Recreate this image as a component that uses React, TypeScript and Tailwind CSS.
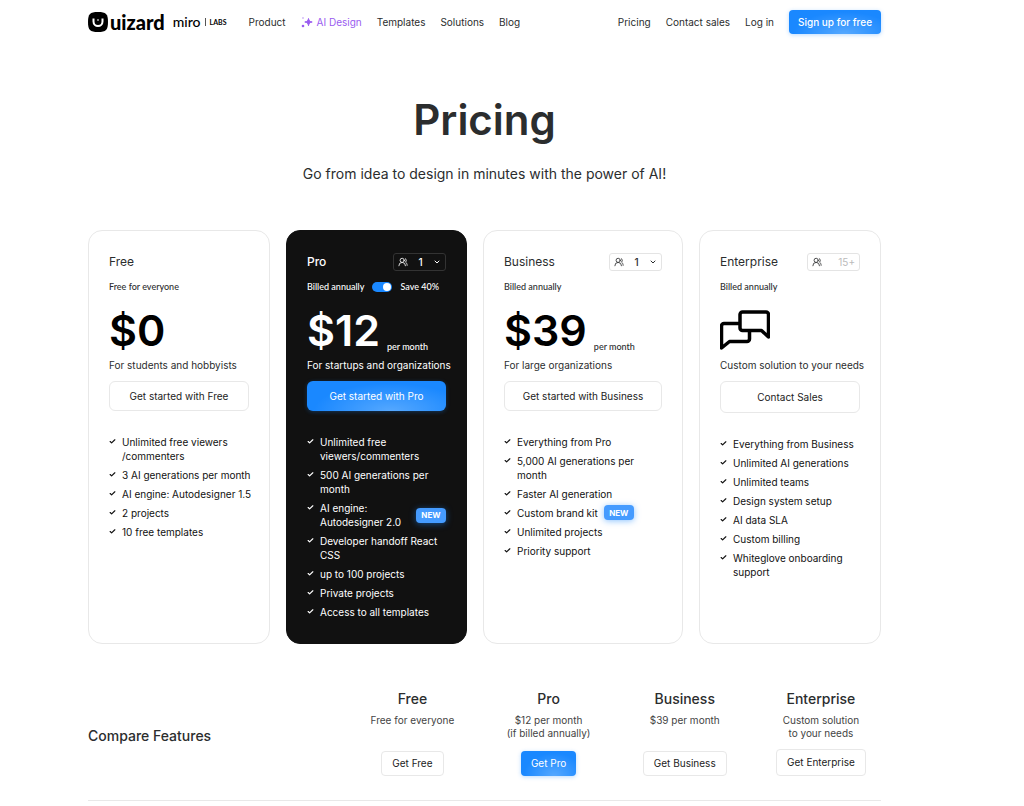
import type { ReactNode } from "react";
import clsx from "clsx";
import { Check, ChevronDown, UsersRound } from "lucide-react";

interface Feature {
  label: string;
  isNew?: boolean;
}

interface Plan {
  name: string;
  billing: string;
  price?: string;
  perMonth?: boolean;
  description: string;
  cta: string;
  seats?: string;
  features: Feature[];
}

const plans: Plan[] = [
  {
    name: "Free",
    billing: "Free for everyone",
    price: "$0",
    description: "For students and hobbyists",
    cta: "Get started with Free",
    features: [
      { label: "Unlimited free viewers\n/commenters" },
      { label: "3 AI generations per month" },
      { label: "AI engine: Autodesigner 1.5" },
      { label: "2 projects" },
      { label: "10 free templates" },
    ],
  },
  {
    name: "Pro",
    billing: "Billed annually",
    price: "$12",
    perMonth: true,
    description: "For startups and organizations",
    cta: "Get started with Pro",
    seats: "1",
    features: [
      { label: "Unlimited free\nviewers/commenters" },
      { label: "500 AI generations per\nmonth" },
      { label: "AI engine:\nAutodesigner 2.0", isNew: true },
      { label: "Developer handoff React\nCSS" },
      { label: "up to 100 projects" },
      { label: "Private projects" },
      { label: "Access to all templates" },
    ],
  },
  {
    name: "Business",
    billing: "Billed annually",
    price: "$39",
    perMonth: true,
    description: "For large organizations",
    cta: "Get started with Business",
    seats: "1",
    features: [
      { label: "Everything from Pro" },
      { label: "5,000 AI generations per\nmonth" },
      { label: "Faster AI generation" },
      { label: "Custom brand kit", isNew: true },
      { label: "Unlimited projects" },
      { label: "Priority support" },
    ],
  },
  {
    name: "Enterprise",
    billing: "Billed annually",
    description: "Custom solution to your needs",
    cta: "Contact Sales",
    seats: "15+",
    features: [
      { label: "Everything from Business" },
      { label: "Unlimited AI generations" },
      { label: "Unlimited teams" },
      { label: "Design system setup" },
      { label: "AI data SLA" },
      { label: "Custom billing" },
      { label: "Whiteglove onboarding\nsupport" },
    ],
  },
];

const compare = [
  { name: "Free", note: "Free for everyone", cta: "Get Free" },
  { name: "Pro", note: "$12 per month\n(if billed annually)", cta: "Get Pro" },
  { name: "Business", note: "$39 per month", cta: "Get Business" },
  { name: "Enterprise", note: "Custom solution\nto your needs", cta: "Get Enterprise" },
];

const blueButton =
  "bg-[#1a88ff] bg-[radial-gradient(ellipse_at_60%_100%,#55a8ff_0%,#1a88ff_65%)] text-white shadow-[0_1px_4px_rgba(26,136,255,0.3)]";
const plainButton = "border border-[#e8e8e8] bg-white text-[#222]";

export default function App() {
  return (
    <div className="min-h-screen bg-white pl-[88px] pr-[143px] font-['Inter',sans-serif] text-[#2b2d2e]">
      <Header />
      <main>
        <section className="pt-[52px] text-center">
          <h1 className="text-[42px] font-semibold leading-[48px]">Pricing</h1>
          <p className="mt-[18px] text-[14px] leading-6">
            Go from idea to design in minutes with the power of AI!
          </p>
        </section>
        <section className="mt-11 grid grid-cols-[182fr_181fr_200fr_182fr] gap-4">
          {plans.map((plan) => (
            <PlanCard key={plan.name} {...plan} />
          ))}
        </section>
        <CompareTable />
      </main>
    </div>
  );
}

function Header() {
  return (
    <header className="flex h-11 items-center text-[10px]">
      <a href="#" className="flex items-center font-['Lato',sans-serif] text-black">
        <LogoMark />
        <span className="ml-0.5 text-[20px] font-black leading-5">uizard</span>
        <span className="ml-2 text-[14px] font-medium leading-5">miro</span>
        <span className="ml-1 h-2 w-px bg-[#555]" />
        <span className="ml-1 text-[7px] font-bold">LABS</span>
      </a>
      <nav className="ml-[22px] flex items-center gap-[15px]">
        <a href="#">Product</a>
        <a href="#" className="flex items-center gap-1 text-[#9a5cf0]">
          <Sparkles />
          AI Design
        </a>
        <a href="#">Templates</a>
        <a href="#">Solutions</a>
        <a href="#">Blog</a>
      </nav>
      <nav className="ml-auto flex items-center gap-[15px]">
        <a href="#">Pricing</a>
        <a href="#">Contact sales</a>
        <a href="#">Log in</a>
        <button className={clsx("h-6 w-[92px] rounded font-medium", blueButton)}>
          Sign up for free
        </button>
      </nav>
    </header>
  );
}

function PlanCard(props: Plan) {
  const dark = props.name === "Pro";
  const enterprise = props.name === "Enterprise";

  return (
    <article
      className={clsx(
        "min-h-[414px] min-w-0 rounded-[14px] border px-5 pt-[22px] pb-6 text-[10px]",
        dark ? "border-[#111] bg-[#111] text-white" : "border-[#e8e8e8] bg-white",
      )}
    >
      <div className="flex h-[18px] items-center justify-between">
        <h2 className={clsx("text-[12px]", dark && "font-medium")}>{props.name}</h2>
        {props.seats && <SeatSelect plan={props.name} seats={props.seats} dark={dark} />}
      </div>

      <div className="mt-2 flex h-4 items-center whitespace-nowrap font-['Lato',sans-serif] text-[9px] font-medium">
        {dark ? (
          <label className="flex items-center gap-2">
            {props.billing}
            <input type="checkbox" defaultChecked className="peer sr-only" />
            <span className="flex h-[10px] w-5 justify-end rounded-full bg-[#1a88ff] p-px">
              <span className="size-2 rounded-full bg-white" />
            </span>
            Save 40%
          </label>
        ) : (
          props.billing
        )}
      </div>

      <div className="mt-2 flex h-[54px] items-center">
        {props.price ? (
          <div className="flex items-end gap-[7px]">
            <span
              className={clsx(
                "text-[43px] font-semibold leading-[54px]",
                dark ? "text-white" : "text-black",
              )}
            >
              {props.price}
            </span>
            {props.perMonth && (
              <span className="whitespace-nowrap pb-1 font-['Lato',sans-serif] text-[9px] font-medium leading-3">
                per month
              </span>
            )}
          </div>
        ) : (
          <ChatBubbles />
        )}
      </div>

      <p className="h-4 whitespace-nowrap leading-4">{props.description}</p>
      <button
        className={clsx(
          "mt-2 w-full rounded-md",
          enterprise ? "h-8" : "h-[30px]",
          dark ? blueButton : plainButton,
        )}
      >
        {props.cta}
      </button>

      <ul className={clsx("mt-6 flex flex-col gap-[5px]", !dark && "text-[#111]")}>
        {props.features.map((feature) => (
          <li key={feature.label} className="flex items-start gap-[6px] whitespace-pre leading-[14px]">
            <Check className="mt-[3px] size-[7px] shrink-0" strokeWidth={4} />
            <span>{feature.label}</span>
            {feature.isNew && <NewBadge className={dark ? "ml-auto self-center" : ""} />}
          </li>
        ))}
      </ul>
    </article>
  );
}

function SeatSelect({ plan, seats, dark }: { plan: string; seats: string; dark: boolean }) {
  const fixed = seats === "15+";

  return (
    <label
      className={clsx(
        "flex h-[18px] w-[53px] items-center rounded-[3px] border px-1",
        dark ? "border-[#333]" : "border-[#e4e4e4]",
      )}
    >
      <UsersRound className="size-[10px] shrink-0" strokeWidth={2} />
      <select
        aria-label={`${plan} seats`}
        disabled={fixed}
        className={clsx(
          "min-w-0 flex-1 appearance-none bg-transparent text-[10px]",
          fixed ? "text-right text-[#bbb]" : "text-center font-medium",
        )}
      >
        <option>{seats}</option>
      </select>
      {!fixed && <ChevronDown className="size-2 shrink-0" strokeWidth={3} />}
    </label>
  );
}

function NewBadge({ className }: { className?: string }) {
  return (
    <span
      className={clsx(
        "-my-px flex h-[15px] w-[30px] shrink-0 items-center justify-center rounded-sm bg-[#459bff] text-[8px] font-bold text-white shadow-[0_1px_6px_rgba(26,136,255,0.5)]",
        className,
      )}
    >
      NEW
    </span>
  );
}

function CompareTable() {
  return (
    <section className="mt-[46px] border-b border-[#e8e8e8]">
      {/* Slightly wider than the rule so the last column sits under its card */}
      <table className="w-[calc(100%+8px)] table-fixed">
        <thead>
          <tr>
            <th scope="col" className="w-[32%] pb-5 text-left text-[14px] font-medium">
              Compare Features
            </th>
            {compare.map((column) => (
              <th key={column.name} scope="col" className="pb-6 align-top font-normal">
                <CompareColumn note={column.note} name={column.name}>
                  <button
                    className={clsx(
                      "rounded px-[10px] text-[10px]",
                      column.name === "Enterprise" ? "h-[27px]" : "h-[25px]",
                      column.name === "Pro" ? blueButton : plainButton,
                    )}
                  >
                    {column.cta}
                  </button>
                </CompareColumn>
              </th>
            ))}
          </tr>
        </thead>
      </table>
    </section>
  );
}

function CompareColumn({ name, note, children }: { name: string; note: string; children: ReactNode }) {
  return (
    <div className="flex h-[86px] flex-col items-center justify-between">
      <div>
        <div className="text-[14px] font-medium leading-[18px]">{name}</div>
        <div className="mt-1.5 whitespace-pre text-[10px] leading-[13px] text-[#444]">{note}</div>
      </div>
      {children}
    </div>
  );
}

function LogoMark() {
  return (
    <svg viewBox="0 0 20 20" className="size-5">
      <path
        d="M10 0C14 0 16.500 .6 18 2s2 4 2 8-.6 6.500-2 8-4 2-8 2-6.500-.6-8-2-2-4-2-8 .6-6.500 2-8 4-2 8-2Z"
        fill="black"
      />
      <path d="M5.500 6.500v3a4.500 4.500 0 0 0 9 0v-3" fill="none" stroke="white" strokeWidth="2" />
      <path d="M10 7v2" stroke="white" strokeWidth="1" />
    </svg>
  );
}

function Sparkles() {
  return (
    <svg viewBox="0 0 12 12" className="size-3" fill="currentColor">
      <path d="M7.500 2.500c.5 2.300 1.200 3 3.700 3.500-2.500.5-3.200 1.200-3.700 3.700C7 7.200 6.300 6.500 3.800 6 6.300 5.500 7 4.800 7.500 2.500Z" stroke="currentColor" strokeWidth="1" />
      <circle cx="2" cy="2" r=".8" opacity=".7" />
      <circle cx="2" cy="10" r="1.300" />
    </svg>
  );
}

function ChatBubbles() {
  return (
    <svg viewBox="0 0 50 40" className="h-10 w-[50px]" fill="none" stroke="black" strokeWidth="3.500" strokeLinejoin="round">
      <path d="M20 13.500H4a2.500 2.500 0 0 0-2.500 2.500v22l8-6.500H27a2.500 2.500 0 0 0 2.500-2.500V21" />
      <path d="M22.500 2h23.500a2.500 2.500 0 0 1 2.500 2.500v22.500l-7-6.500h-19a2.500 2.500 0 0 1-2.500-2.500V4.500a2.500 2.500 0 0 1 2.500-2.500Z" />
    </svg>
  );
}
